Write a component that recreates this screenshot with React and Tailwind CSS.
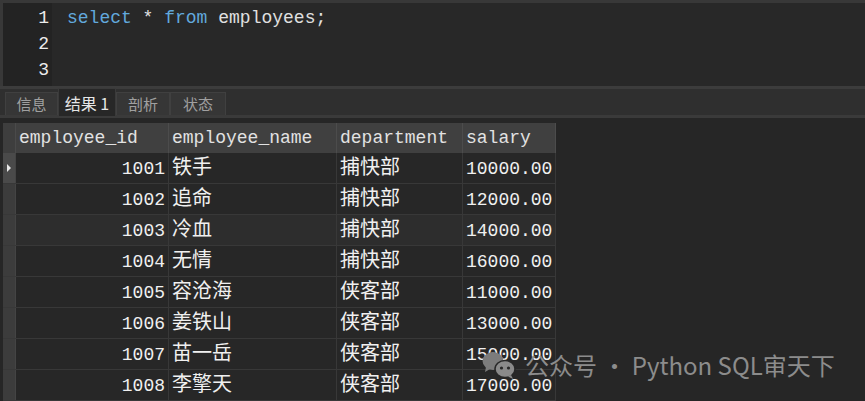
import React from 'react';

const mono = { fontFamily: '"Liberation Mono", "Noto Sans CJK SC", monospace' };

const rows = [
  { id: '1001', name: '铁手', dept: '捕快部', salary: '10000.00' },
  { id: '1002', name: '追命', dept: '捕快部', salary: '12000.00' },
  { id: '1003', name: '冷血', dept: '捕快部', salary: '14000.00' },
  { id: '1004', name: '无情', dept: '捕快部', salary: '16000.00' },
  { id: '1005', name: '容沧海', dept: '侠客部', salary: '11000.00' },
  { id: '1006', name: '姜铁山', dept: '侠客部', salary: '13000.00' },
  { id: '1007', name: '苗一岳', dept: '侠客部', salary: '15000.00' },
  { id: '1008', name: '李擎天', dept: '侠客部', salary: '17000.00' },
];

const tabs = ['信息', '结果 1', '剖析', '状态'];

const WeChatIcon = () => (
  <svg width="36" height="30" viewBox="0 0 36 30">
    <ellipse cx="11" cy="11" rx="10.5" ry="9" fill="#7c7c7c" />
    <path d="M4 17 L3 22 L8 19 Z" fill="#7c7c7c" />
    <ellipse cx="23" cy="19" rx="10" ry="8.5" fill="#8a8a8a" stroke="#272727" strokeWidth="1.5" />
    <path d="M29 25 L31 29 L26 26.5 Z" fill="#8a8a8a" />
    <circle cx="19.5" cy="18" r="1.6" fill="#272727" />
    <circle cx="26.5" cy="18" r="1.6" fill="#272727" />
  </svg>
);

export default function App() {
  return (
    <div className="relative w-[865px] h-[401px] overflow-hidden bg-[#262626] text-[#dcdcdc]" style={mono}>
      {/* 编辑器 */}
      <div className="flex h-[86px] border-t-[3px] border-l-[3px] border-[#383838] bg-[#282828] text-[18px]">
        <div className="w-[49px] bg-[#232323] pt-[2px] pr-[3px] text-right text-[#ececec]">
          <div className="h-[26px] leading-[26px]">1</div>
          <div className="h-[26px] leading-[26px]">2</div>
          <div className="h-[26px] leading-[26px]">3</div>
        </div>
        <div className="pl-[15px] pt-[2px]">
          <div className="h-[26px] leading-[26px] whitespace-pre">
            <span className="text-[#62a9dd]">select</span>
            <span className="text-[#e0e0e0]"> * </span>
            <span className="text-[#62a9dd]">from</span>
            <span className="text-[#e0e0e0]"> employees;</span>
          </div>
        </div>
      </div>

      {/* 分隔线 */}
      <div className="h-[3px] bg-[#3c3c3c]" />

      {/* 标签栏 */}
      <div
        className="flex items-end h-[26px] bg-[#2f2f2f] pl-[5px]"
        style={{ fontFamily: '"Noto Sans CJK SC", "Noto Sans", sans-serif' }}
      >
        {tabs.map((t, i) =>
          i === 1 ? (
            <div
              key={t}
              className="relative -mt-[2px] h-[28px] w-[58px] bg-[#272727] border-x border-t border-[#3a3a3a] flex items-center justify-center text-[16px] text-[#e6e6e6] z-10 -mb-[1px]"
            >
              {t}
            </div>
          ) : (
            <div
              key={t}
              className={`h-[23px] ${i === 0 ? 'w-[53px]' : i === 2 ? 'w-[54px]' : 'w-[56px]'} bg-[#363636] border-x border-t border-[#404040] flex items-center justify-center text-[15px] text-[#a0a0a0]`}
            >
              {t}
            </div>
          )
        )}
      </div>
      <div className="h-[3px] bg-[#3a3a3a]" />

      {/* 结果表格 */}
      <div className="pt-[5px] pl-[3px]">
        <div className="inline-block">
          <div className="flex h-[30px] bg-[#404040] text-[18px] text-[#e2e2e2]">
            <div className="w-[13px] bg-[#3e3e3e] border-r border-[#4a4a4a]" />
            <div className="w-[153px] pl-[3px] leading-[31px] border-r border-[#4c4c4c]">employee_id</div>
            <div className="w-[168px] pl-[3px] leading-[31px] border-r border-[#4c4c4c]">employee_name</div>
            <div className="w-[126px] pl-[3px] leading-[31px] border-r border-[#4c4c4c]">department</div>
            <div className="w-[93px] pl-[3px] leading-[31px] border-r border-[#4c4c4c]">salary</div>
          </div>
          {rows.map((r, i) => (
            <div
              key={r.id}
              className={`flex h-[31px] border-b border-[#383838] text-[18px] text-[#f0f0f0] ${i === 2 ? 'bg-[#2d2d2d]' : 'bg-[#272727]'}`}
            >
              <div className={`w-[13px] flex items-center justify-center border-r border-[#444] ${i === 0 ? 'bg-[#4a4a4a]' : 'bg-[#3c3c3c]'}`}>
                {i === 0 && (
                  <svg width="6" height="10" viewBox="0 0 6 10">
                    <path d="M1 1 L5 5 L1 9 Z" fill="#e8e8e8" />
                  </svg>
                )}
              </div>
              <div className="w-[153px] pr-[3px] text-right leading-[32px] border-r border-[#383838]">{r.id}</div>
              <div className="w-[168px] pl-[3px] leading-[31px] text-[20px] border-r border-[#383838]">{r.name}</div>
              <div className="w-[126px] pl-[3px] leading-[31px] text-[20px] border-r border-[#383838]">{r.dept}</div>
              <div className="w-[93px] pl-[3px] leading-[32px] border-r border-[#383838]">{r.salary}</div>
            </div>
          ))}
        </div>
      </div>

      {/* 水印 */}
      <div
        className="absolute left-[482px] top-[350px] flex items-center gap-[7px] text-[24px] text-[#8c8c8c]"
        style={{ fontFamily: '"Noto Sans CJK SC", "Noto Sans", sans-serif' }}
      >
        <WeChatIcon />
        <span className="leading-[30px]">公众号 · Python SQL审天下</span>
      </div>
    </div>
  );
}
